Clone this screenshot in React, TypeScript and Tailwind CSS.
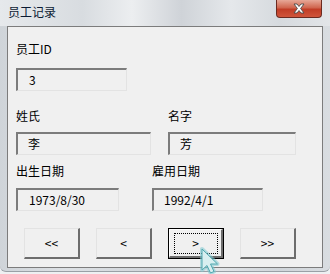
import React from 'react';

const sunken =
  'h-[23px] flex items-center pl-[10px] bg-[#f0f0f0] border-t-2 border-l-2 border-b border-r border-t-[#7c7c7c] border-l-[#7c7c7c] border-b-[#e3e3e3] border-r-[#e3e3e3]';

function Field({ value, width, pad = 'pl-[10px]' }: { value: string; width: string; pad?: string }) {
  return (
    <div className={`${sunken} ${width} ${pad}`}>
      <span className="text-[12px] leading-[14px] text-black">{value}</span>
    </div>
  );
}

function NavButton({ label, focused }: { label: string; focused?: boolean }) {
  if (focused) {
    return (
      <div className="w-[56px] h-[31px] border border-black">
        <div className="w-full h-full flex items-center justify-center bg-[#f0f0f0] border-t border-l border-b-2 border-r-2 border-t-[#ffffff] border-l-[#ffffff] border-b-[#6d6d6d] border-r-[#6d6d6d]">
          <div className="w-[44px] h-[21px] flex items-center justify-center border border-dotted border-black">
            <span className="text-[12px] leading-[14px] text-black">{label}</span>
          </div>
        </div>
      </div>
    );
  }
  return (
    <div className="w-[56px] h-[31px] flex items-center justify-center bg-[#f0f0f0] border-t border-l border-b-2 border-r-2 border-t-[#e3e3e3] border-l-[#e3e3e3] border-b-[#6d6d6d] border-r-[#6d6d6d]">
      <span className="text-[12px] leading-[14px] text-black">{label}</span>
    </div>
  );
}

export default function App() {
  return (
    <div className="relative w-[330px] h-[274px] overflow-hidden bg-[#eef0f2] font-['Noto_Sans_CJK_SC','Noto_Sans',sans-serif]">
      {/* window frame */}
      <div className="h-[272px] flex flex-col rounded-b-[6px] border-b border-[#9aa0a6] bg-[linear-gradient(90deg,#cfd4d9,#dde1e5_20%,#d2d6db_45%,#e3e6e9_65%,#d0d5da_85%,#d9dde1)]">
        {/* title bar */}
        <div className="h-[26px] flex items-start justify-between bg-[linear-gradient(90deg,#e6e9ec,#d8dce0_25%,#eceef0_40%,#cfd3d8_55%,#e5e8eb_70%,#d6dade_85%,#e2e5e8)]">
          <span className="pl-[8px] pt-[5px] text-[12px] leading-[14px] text-[#0b1a33]">员工记录</span>
          <div className="mr-[8px] w-[46px] h-[18px] flex items-center justify-center rounded-b-[4px] border border-t-0 border-[#6b2a20] bg-[linear-gradient(180deg,#e7a897,#d0664f_45%,#c13d26_55%,#d0553b)]">
            <svg width="14" height="11" viewBox="0 0 14 11">
              <path
                d="M2 1 L5 1 L7 3.5 L9 1 L12 1 L8.6 5.5 L12 10 L9 10 L7 7.5 L5 10 L2 10 L5.4 5.5 Z"
                fill="#ffffff"
                stroke="#4a4a4a"
                strokeWidth="0.9"
                strokeLinejoin="round"
              />
            </svg>
          </div>
        </div>

        {/* client area */}
        <div className="mx-[7px] h-[242px] flex flex-col pl-[8px] bg-[#f0f0f0] border border-[#7c7c7c]">
          <div className="mt-[14px] h-[16px] text-[12px] leading-[16px] text-black">员工ID</div>
          <div className="mt-[11px]">
            <Field value="3" width="w-[111px]" pad="pl-[11px]" />
          </div>

          <div className="mt-[17px] flex">
            <div className="w-[152px] flex flex-col">
              <div className="h-[16px] text-[12px] leading-[16px] text-black">姓氏</div>
              <div className="mt-[8px]">
                <Field value="李" width="w-[135px]" pad="pl-[7px]" />
              </div>
            </div>
            <div className="flex flex-col">
              <div className="h-[16px] text-[12px] leading-[16px] text-black">名字</div>
              <div className="mt-[8px]">
                <Field value="芳" width="w-[128px]" pad="pl-[9px]" />
              </div>
            </div>
          </div>

          <div className="mt-[8px] flex">
            <div className="w-[136px] flex flex-col">
              <div className="h-[16px] text-[12px] leading-[16px] text-black">出生日期</div>
              <div className="mt-[9px]">
                <Field value="1973/8/30" width="w-[103px]" pad="pl-[11px]" />
              </div>
            </div>
            <div className="flex flex-col">
              <div className="h-[16px] text-[12px] leading-[16px] text-black">雇用日期</div>
              <div className="mt-[9px]">
                <Field value="1992/4/1" width="w-[111px]" pad="pl-[10px]" />
              </div>
            </div>
          </div>

          <div className="mt-[17px] pl-[8px] flex gap-[16px]">
            <NavButton label="<<" />
            <NavButton label="<" />
            <NavButton label=">" focused />
            <NavButton label=">>" />
          </div>
        </div>
      </div>

      {/* mouse cursor */}
      <svg className="absolute left-[198px] top-[246px]" width="30" height="30" viewBox="0 0 30 30">
        <path
          d="M4 3 L4 24 L9 19.5 L12.5 27 L16 25.5 L12.5 18 L19.5 18 Z"
          fill="none"
          stroke="#7fc9cf"
          strokeOpacity="0.55"
          strokeWidth="4"
          strokeLinejoin="round"
        />
        <path
          d="M4 3 L4 24 L9 19.5 L12.5 27 L16 25.5 L12.5 18 L19.5 18 Z"
          fill="#d8eff0"
          stroke="#4fa8b0"
          strokeWidth="1"
          strokeLinejoin="round"
        />
      </svg>
    </div>
  );
}
